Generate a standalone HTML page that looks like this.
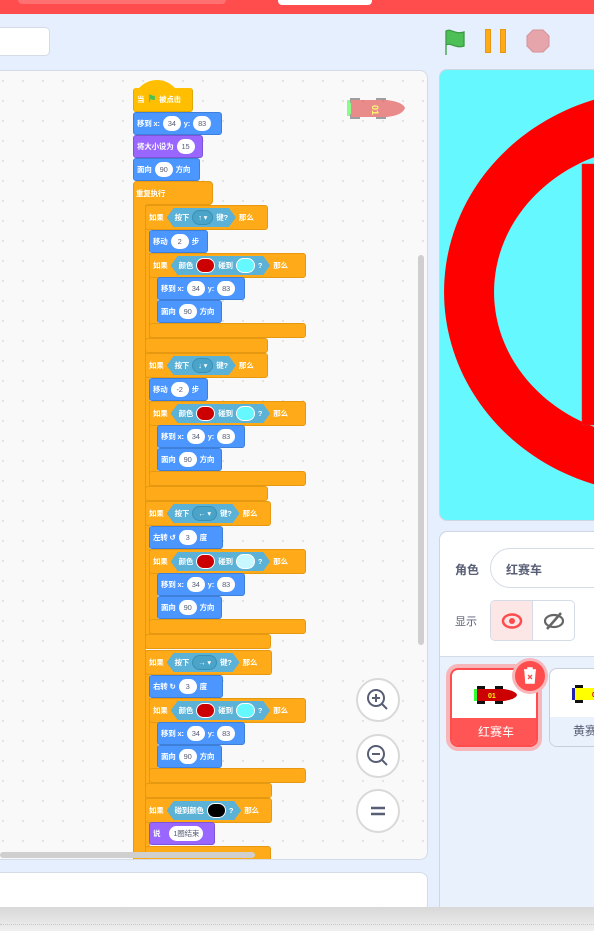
<!DOCTYPE html>
<html><head><meta charset="utf-8">
<style>
*{margin:0;padding:0;box-sizing:border-box}
body{width:594px;height:931px;overflow:hidden;background:#e5effd;position:relative;font-family:"Liberation Sans","Noto Sans CJK SC",sans-serif}
.a{position:absolute}
#code{position:absolute;left:-8px;top:70px;width:436px;height:790px;background-color:#f9f9f9;background-image:radial-gradient(#dcdcdc 0.8px,transparent 1px);background-size:20px 20px;border:1px solid #d5dbe6;border-radius:8px;overflow:hidden}
.b{position:absolute;display:flex;align-items:center;color:#fff;font-size:7.5px;font-weight:bold;padding-left:3px;gap:3px;white-space:nowrap;border-radius:3px;letter-spacing:-0.2px}
.mo{background:#4c97ff;border:1px solid #3d7fd9}
.lo{background:#9966ff;border:1px solid #7e55d9}
.ct{background:#ffab19;border:1px solid #e59810}
.ev{background:#ffbf00;border:1px solid #e0a800}
.p{background:#fff;color:#575e75;border-radius:9px;height:15px;min-width:18px;padding:0 4px;display:inline-flex;align-items:center;justify-content:center;font-weight:normal;font-size:7.5px}
.hx{background:#5cb1d6;height:19px;display:inline-flex;align-items:center;gap:3px;padding:0 8px;clip-path:polygon(7px 0,calc(100% - 7px) 0,100% 50%,calc(100% - 7px) 100%,7px 100%,0 50%)}
.dd{background:#4aa3c9;border:1px solid #3b8fb3;border-radius:9px;height:15px;padding:0 5px;display:inline-flex;align-items:center;font-weight:normal}
.sw{width:19px;height:15px;border-radius:8px;display:inline-block;border:1px solid #fff}
.zb{position:absolute;left:356px;width:44px;height:44px;border-radius:50%;background:#fff;border:2px solid #d9d9d9;display:flex;align-items:center;justify-content:center}
</style></head><body>
<!-- top bar -->
<div class="a" style="left:0;top:0;width:594px;height:14px;background:#ff4c4c"></div>
<div class="a" style="left:18px;top:0;width:208px;height:4px;background:#ff7070;border-radius:0 0 4px 4px"></div>
<div class="a" style="left:278px;top:0;width:94px;height:5px;background:#fff;border-radius:0 0 4px 4px"></div>
<div class="a" style="left:-6px;top:27px;width:56px;height:29px;background:#fff;border:1px solid #d5dbe6;border-radius:5px"></div>
<!-- controls -->
<svg class="a" style="left:444px;top:28px" width="26" height="28" viewBox="0 0 26 28"><path d="M2 27V3 M2 3C7 0 11 7 20 4V18C11 21 7 14 2 17Z" fill="#4cbf56" stroke="#3a9a43" stroke-width="1.3"/></svg>
<div class="a" style="left:485px;top:29px;width:6px;height:24px;background:#ffab19;border:1px solid #e59810"></div>
<div class="a" style="left:500px;top:29px;width:6px;height:24px;background:#ffab19;border:1px solid #e59810"></div>
<svg class="a" style="left:526px;top:29px" width="24" height="24"><polygon points="7,1 17,1 23,7 23,17 17,23 7,23 1,17 1,7" fill="#e6a5aa" stroke="#d69198"/></svg>

<div id="code">
<div style="position:absolute;left:7px;top:-71px">
<!-- sprite ghost -->
<svg class="a" style="left:343px;top:95px;opacity:.55" width="64" height="28"><rect x="4" y="5" width="4" height="16" fill="#3f3"/><rect x="7" y="3" width="10" height="5" fill="#555"/><rect x="7" y="19" width="10" height="5" fill="#555"/><rect x="33" y="3" width="10" height="5" fill="#555"/><rect x="33" y="19" width="10" height="5" fill="#555"/><path d="M8 5H44Q60 7 62 13Q60 20 44 22H8Z" fill="#d33"/><text x="24" y="11" font-size="9" fill="#ff0" font-weight="bold" transform="rotate(90 27 13)">01</text></svg>

<!-- repeat arm -->
<div class="a ct" style="left:133px;top:181px;width:80px;height:24px;border-radius:4px"></div>
<div class="a" style="left:133px;top:190px;width:13px;height:700px;background:#ffab19;border-left:1px solid #e59810"></div>
<div class="b" style="left:133px;top:181px;height:24px;background:transparent">重复执行</div>

<!-- hat -->
<div class="a" style="left:133px;top:80px;width:48px;height:24px;background:#ffbf00;border-radius:24px 24px 0 0"></div>
<div class="b ev" style="left:133px;top:88px;width:60px;height:24px;border-top:none">当 <span style="color:#4cbf56;font-size:10px">⚑</span> 被点击</div>
<div class="b mo" style="left:133px;top:112px;width:89px;height:23px">移到 x: <span class="p">34</span> y: <span class="p">83</span></div>
<div class="b lo" style="left:133px;top:135px;width:70px;height:23px">将大小设为 <span class="p">15</span></div>
<div class="b mo" style="left:133px;top:158px;width:67px;height:23px">面向 <span class="p">90</span> 方向</div>

<!-- G1 -->
<div class="a" style="left:145px;top:205px;width:5px;height:148px;background:#ffab19;border-left:1px solid #e59810"></div>
<div class="b ct" style="left:145px;top:205px;width:123px;height:25px">如果<span class="hx">按下 <span class="dd">↑ ▾</span> 键?</span>那么</div>
<div class="b mo" style="left:149px;top:230px;width:59px;height:23px">移动 <span class="p">2</span> 步</div>
<div class="a" style="left:149px;top:253px;width:9px;height:85px;background:#ffab19;border-left:1px solid #e59810"></div>
<div class="b ct" style="left:149px;top:253px;width:157px;height:25px">如果<span class="hx">颜色 <span class="sw" style="background:#c00"></span> 碰到 <span class="sw" style="background:#66f8ff"></span> ?</span>那么</div>
<div class="b mo" style="left:157px;top:277px;width:88px;height:23px">移到 x: <span class="p">34</span> y: <span class="p">83</span></div>
<div class="b mo" style="left:157px;top:300px;width:65px;height:23px">面向 <span class="p">90</span> 方向</div>
<div class="a ct" style="left:149px;top:323px;width:157px;height:15px;border-radius:3px"></div>
<div class="a ct" style="left:145px;top:338px;width:123px;height:15px;border-radius:3px"></div>

<!-- G2 -->
<div class="a" style="left:145px;top:353px;width:5px;height:148px;background:#ffab19;border-left:1px solid #e59810"></div>
<div class="b ct" style="left:145px;top:353px;width:123px;height:25px">如果<span class="hx">按下 <span class="dd">↓ ▾</span> 键?</span>那么</div>
<div class="b mo" style="left:149px;top:378px;width:59px;height:23px">移动 <span class="p">-2</span> 步</div>
<div class="a" style="left:149px;top:401px;width:9px;height:85px;background:#ffab19;border-left:1px solid #e59810"></div>
<div class="b ct" style="left:149px;top:401px;width:157px;height:25px">如果<span class="hx">颜色 <span class="sw" style="background:#c00"></span> 碰到 <span class="sw" style="background:#66f8ff"></span> ?</span>那么</div>
<div class="b mo" style="left:157px;top:425px;width:88px;height:23px">移到 x: <span class="p">34</span> y: <span class="p">83</span></div>
<div class="b mo" style="left:157px;top:448px;width:65px;height:23px">面向 <span class="p">90</span> 方向</div>
<div class="a ct" style="left:149px;top:471px;width:157px;height:15px;border-radius:3px"></div>
<div class="a ct" style="left:145px;top:486px;width:123px;height:15px;border-radius:3px"></div>

<!-- G3 -->
<div class="a" style="left:145px;top:501px;width:5px;height:148px;background:#ffab19;border-left:1px solid #e59810"></div>
<div class="b ct" style="left:145px;top:501px;width:126px;height:25px">如果<span class="hx">按下 <span class="dd">← ▾</span> 键?</span>那么</div>
<div class="b mo" style="left:149px;top:526px;width:74px;height:23px">左转 ↺ <span class="p">3</span> 度</div>
<div class="a" style="left:149px;top:549px;width:9px;height:85px;background:#ffab19;border-left:1px solid #e59810"></div>
<div class="b ct" style="left:149px;top:549px;width:157px;height:25px">如果<span class="hx">颜色 <span class="sw" style="background:#c00"></span> 碰到 <span class="sw" style="background:#c8f8ff"></span> ?</span>那么</div>
<div class="b mo" style="left:157px;top:573px;width:88px;height:23px">移到 x: <span class="p">34</span> y: <span class="p">83</span></div>
<div class="b mo" style="left:157px;top:596px;width:65px;height:23px">面向 <span class="p">90</span> 方向</div>
<div class="a ct" style="left:149px;top:619px;width:157px;height:15px;border-radius:3px"></div>
<div class="a ct" style="left:145px;top:634px;width:126px;height:15px;border-radius:3px"></div>

<!-- G4 -->
<div class="a" style="left:145px;top:650px;width:5px;height:148px;background:#ffab19;border-left:1px solid #e59810"></div>
<div class="b ct" style="left:145px;top:650px;width:127px;height:25px">如果<span class="hx">按下 <span class="dd">→ ▾</span> 键?</span>那么</div>
<div class="b mo" style="left:149px;top:675px;width:74px;height:23px">右转 ↻ <span class="p">3</span> 度</div>
<div class="a" style="left:149px;top:698px;width:9px;height:85px;background:#ffab19;border-left:1px solid #e59810"></div>
<div class="b ct" style="left:149px;top:698px;width:157px;height:25px">如果<span class="hx">颜色 <span class="sw" style="background:#c00"></span> 碰到 <span class="sw" style="background:#66f8ff"></span> ?</span>那么</div>
<div class="b mo" style="left:157px;top:722px;width:88px;height:23px">移到 x: <span class="p">34</span> y: <span class="p">83</span></div>
<div class="b mo" style="left:157px;top:745px;width:65px;height:23px">面向 <span class="p">90</span> 方向</div>
<div class="a ct" style="left:149px;top:768px;width:157px;height:15px;border-radius:3px"></div>
<div class="a ct" style="left:145px;top:783px;width:127px;height:15px;border-radius:3px"></div>

<!-- last -->
<div class="a" style="left:145px;top:798px;width:5px;height:80px;background:#ffab19;border-left:1px solid #e59810"></div>
<div class="b ct" style="left:145px;top:798px;width:127px;height:25px">如果<span class="hx">碰到颜色 <span class="sw" style="background:#000"></span> ?</span>那么</div>
<div class="b lo" style="left:149px;top:822px;width:66px;height:23px">说 <span class="p" style="margin-left:6px">1圈结束</span></div>
<div class="a ct" style="left:145px;top:846px;width:126px;height:20px;border-radius:3px"></div>

<!-- zoom buttons -->
<div class="zb" style="top:678px"><svg width="26" height="26" viewBox="0 0 26 26" fill="none" stroke="#575e75" stroke-width="2"><circle cx="11" cy="11" r="8"/><path d="M17 17l5 5M7 11h8M11 7v8"/></svg></div>
<div class="zb" style="top:734px"><svg width="26" height="26" viewBox="0 0 26 26" fill="none" stroke="#575e75" stroke-width="2"><circle cx="11" cy="11" r="8"/><path d="M17 17l5 5M7 11h8"/></svg></div>
<div class="zb" style="top:789px"><svg width="20" height="14"><path d="M3 4h14M3 10h14" stroke="#575e75" stroke-width="2.5"/></svg></div>
<!-- scrollbars -->
<div class="a" style="left:418px;top:255px;width:6px;height:390px;background:#cfcfcf;border-radius:3px"></div>
<div class="a" style="left:0;top:852px;width:255px;height:6px;background:#cfcfcf;border-radius:3px"></div>
</div>
</div>

<!-- bottom -->
<div class="a" style="left:-8px;top:872px;width:436px;height:40px;background:#fff;border:1px solid #d5dbe6;border-radius:8px"></div>

<!-- stage -->
<div class="a" style="left:439px;top:69px;width:170px;height:452px;border:1px solid #cfd6e2;border-radius:8px;overflow:hidden;background:#66f8ff">
<svg width="170" height="452" style="position:absolute;left:-1px;top:-1px"><g transform="translate(-439,-69)">
<path fill="#ff0000" fill-rule="evenodd" d="M660 90a216 202 0 1 0 0.1 0Z M660 145a166 147 0 1 0 0.1 0Z"/>
<rect x="582" y="164" width="40" height="261" fill="#ff0000" stroke="#c33" stroke-width=".5"/>
</g></svg></div>

<!-- sprite info -->
<div class="a" style="left:439px;top:531px;width:170px;height:400px;background:#e9f1fc;border:1px solid #cfd6e2;border-radius:8px"></div>
<div class="a" style="left:440px;top:532px;width:160px;height:125px;background:#fff;border-radius:8px 0 0 0;border-bottom:1px solid #d5dbe6"></div>
<div class="a" style="left:455px;top:561px;font-size:12px;color:#575e75;font-weight:bold">角色</div>
<div class="a" style="left:490px;top:548px;width:130px;height:40px;border:1px solid #d5dbe6;border-radius:20px;background:#fff"></div>
<div class="a" style="left:506px;top:561px;font-size:12px;color:#575e75;font-weight:bold">红赛车</div>
<div class="a" style="left:455px;top:613px;font-size:11px;color:#575e75">显示</div>
<div class="a" style="left:490px;top:600px;width:85px;height:41px;border:1px solid #d5dbe6;border-radius:5px;background:#fff;overflow:hidden">
<div class="a" style="left:0;top:0;width:42px;height:41px;background:#fde6e6;border-right:1px solid #d5dbe6"></div>
<svg class="a" style="left:10px;top:10px" width="22" height="20"><ellipse cx="11" cy="10" rx="9" ry="6.5" fill="none" stroke="#ff4c4c" stroke-width="2.5"/><circle cx="11" cy="10" r="3" fill="#ff4c4c"/></svg>
<svg class="a" style="left:52px;top:10px" width="22" height="20"><ellipse cx="11" cy="10" rx="9" ry="6" fill="none" stroke="#666" stroke-width="2.2"/><path d="M4 18L18 2" stroke="#666" stroke-width="2.5"/></svg>
</div>
<!-- sprite tiles -->
<div class="a" style="left:446px;top:664px;width:96px;height:87px;border:4px solid #f7b7ba;border-radius:12px"></div>
<div class="a" style="left:450px;top:668px;width:88px;height:79px;border:2px solid #ff4c4c;border-radius:8px;background:#fff;overflow:hidden">
<div class="a" style="left:0;top:48px;width:88px;height:31px;background:#ff5555;color:#fff;font-size:12px;text-align:center;line-height:28px">红赛车</div>
<svg class="a" style="left:22px;top:15px" width="44" height="20"><rect x="0" y="4" width="3" height="12" fill="#3f3"/><rect x="3" y="1" width="8" height="4" fill="#111"/><rect x="3" y="15" width="8" height="4" fill="#111"/><rect x="21" y="1" width="8" height="4" fill="#111"/><rect x="21" y="15" width="8" height="4" fill="#111"/><path d="M3 4H30Q42 6 43 10Q42 14 30 16H3Z" fill="#c00"/><text x="14" y="13" font-size="7" fill="#ff0" font-weight="bold">01</text></svg>
</div>
<div class="a" style="left:512px;top:658px;width:36px;height:36px;border-radius:50%;background:#f7b7ba"></div>
<div class="a" style="left:515px;top:661px;width:30px;height:30px;border-radius:50%;background:#ff4c4c"></div>
<svg class="a" style="left:521px;top:665px" width="18" height="22"><path d="M3 5h12M7 5V3h4v2M4 5l1 13h8l1-13" fill="#fff" stroke="#fff" stroke-width="1.5"/><path d="M7 10l4 4M11 10l-4 4" stroke="#ff4c4c" stroke-width="1.3"/></svg>
<div class="a" style="left:549px;top:668px;width:60px;height:79px;border:1px solid #c8cfdb;border-radius:8px;background:#fff;overflow:hidden">
<div class="a" style="left:0;top:48px;width:60px;height:31px;background:#e9f1fc;color:#575e75;font-size:12px;line-height:28px;padding-left:23px">黄赛</div>
<svg class="a" style="left:22px;top:15px" width="40" height="20"><rect x="0" y="4" width="3" height="12" fill="#22a"/><rect x="3" y="1" width="8" height="4" fill="#111"/><rect x="3" y="15" width="8" height="4" fill="#111"/><rect x="3" y="4" width="37" height="12" fill="#ff0"/><text x="20" y="13" font-size="7" fill="#c00" font-weight="bold">02</text></svg>
</div>

<!-- bottom gray bar on top -->
<div class="a" style="left:0;top:907px;width:594px;height:24px;background:linear-gradient(#d8d8d8,#efefef)"></div>
<div class="a" style="left:0;top:924px;width:594px;height:0;border-top:1px dotted #c8c8c8"></div>
</body></html>
